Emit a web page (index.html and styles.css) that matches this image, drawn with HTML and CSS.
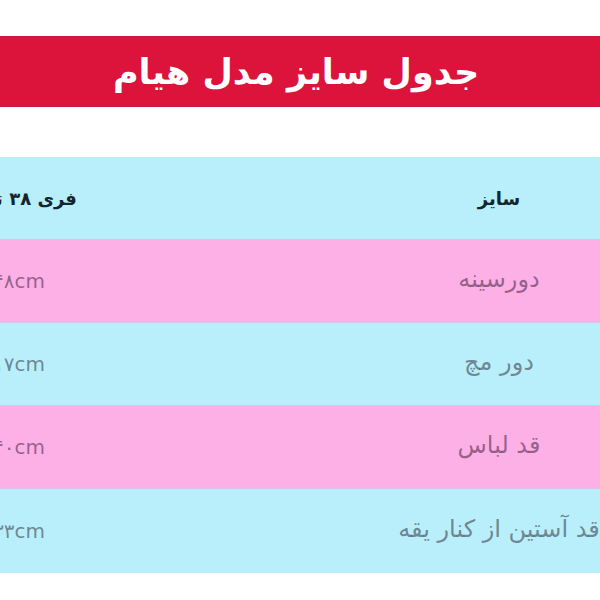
FILE: index.html
```html
<!DOCTYPE html>
<html lang="fa" dir="rtl">
<head>
<meta charset="utf-8">
<title>جدول سایز مدل هیام</title>
<link rel="stylesheet" href="styles.css">
</head>
<body>
<div class="page">
  <div class="title-bar">
    <h1 class="title">جدول سایز مدل هیام</h1>
  </div>
  <div class="table-wrap">
    <div class="size-table">
      <div class="row row-cyan head">
        <div class="cell cell-label">سایز</div>
        <div class="cell cell-value">فری ۳۸ تا ۴۴</div>
      </div>
      <div class="row row-pink">
        <div class="cell cell-label">دورسینه</div>
        <div class="cell cell-value">۴۸cm</div>
      </div>
      <div class="row row-cyan">
        <div class="cell cell-label">دور مچ</div>
        <div class="cell cell-value">۱۷cm</div>
      </div>
      <div class="row row-pink">
        <div class="cell cell-label">قد لباس</div>
        <div class="cell cell-value">۴۰cm</div>
      </div>
      <div class="row row-cyan">
        <div class="cell cell-label">قد آستین از کنار یقه</div>
        <div class="cell cell-value">۳۳cm</div>
      </div>
    </div>
  </div>
</div>
</body>
</html>
```
FILE: styles.css
```css
html, body {
  margin: 0;
  padding: 0;
  background: #ffffff;
}
body {
  width: 600px;
  height: 600px;
  overflow: hidden;
  font-family: "DejaVu Sans", "Noto Sans", sans-serif;
}
.page {
  padding-top: 36px;
}
.title-bar {
  height: 69px;
  background: #dc143b;
  border-top: 1px solid #c5173d;
  border-bottom: 1px solid #c5173d;
  display: flex;
  align-items: center;
  justify-content: center;
}
.title {
  margin: 0;
  color: #ffffff;
  font-size: 35px;
  font-weight: bold;
  line-height: 1;
  padding-right: 8px;
  padding-top: 2px;
}
.table-wrap {
  margin-top: 50px;
  width: 600px;
  overflow: hidden;
}
.size-table {
  width: 960px;
  margin-left: -360px;
  direction: rtl;
}
.row {
  display: grid;
  grid-template-columns: 202px 758px;
  height: 82px;
  border-bottom: 1px solid #d3c6ea;
  align-items: center;
}
.row:last-child {
  border-bottom: none;
  height: 84px;
}
.row-cyan {
  background: #b9eefb;
}
.row-pink {
  background: #fdb0e6;
}
.cell {
  text-align: center;
  white-space: nowrap;
  color: rgba(35, 35, 45, 0.52);
}
.cell-label {
  font-size: 24px;
  padding-bottom: 4px;
}
.row-pink .cell {
  color: rgba(60, 30, 60, 0.55);
}
.head .cell {
  font-weight: bold;
  color: #14262c;
  font-size: 18px;
  padding-bottom: 0;
}
.cell-value {
  font-size: 20px;
}
```
